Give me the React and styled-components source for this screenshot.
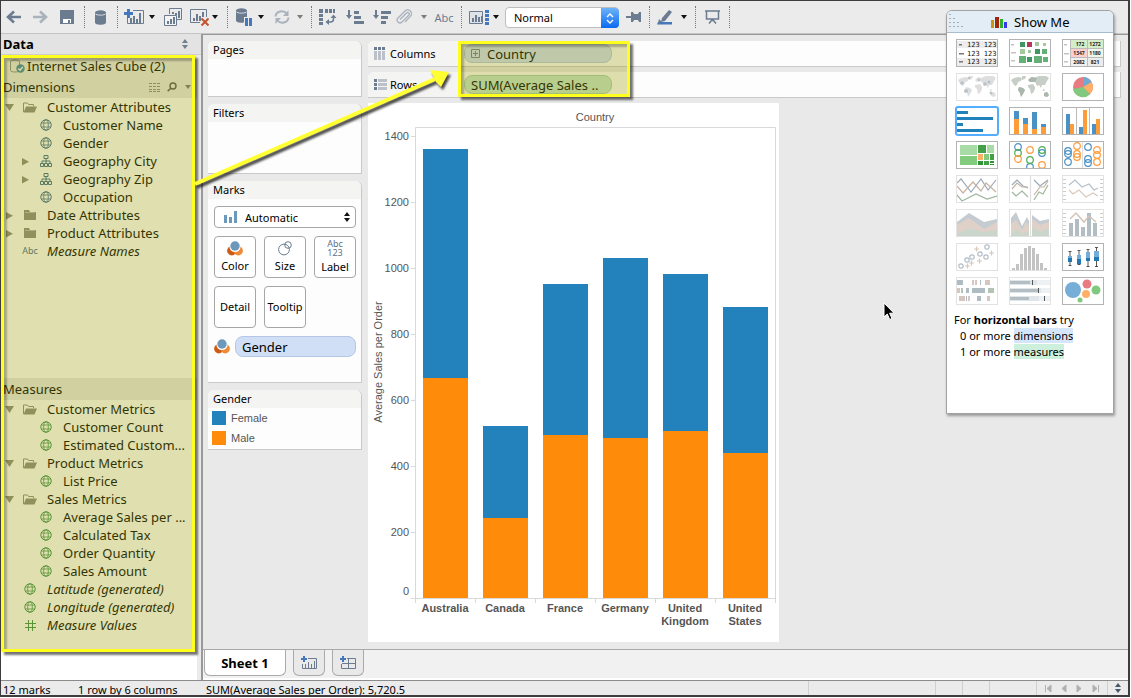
import React, { useState } from 'react'
import styled, { createGlobalStyle, css } from 'styled-components'

const GlobalStyle = createGlobalStyle`
  * {
    box-sizing: border-box;
  }
  body {
    margin: 0;
    background: #fff;
    color: #000;
    font-family: 'Noto Sans', 'Open Sans', sans-serif;
    font-size: 11px;
    line-height: 16px;
  }
  button, select {
    font-family: inherit;
    font-size: inherit;
    color: inherit;
  }
  ul {
    list-style: none;
    margin: 0;
    padding: 0;
  }
  svg {
    display: block;
    flex: none;
  }
`

const BLUE = '#2381bc'
const ORANGE = '#ff8b0b'
const SLATE = '#6b7b90'
const ACCENT = '#4477bb'

const Window = styled.div`
  position: relative;
  display: flex;
  flex-direction: column;
  min-height: 697px;
  height: calc(100vh - 1px);
  margin-right: 1px;
  border: solid #3f3c3f;
  border-width: 1px 2px 2px 1px;
  background: #ebebeb;
  overflow: hidden;
`

/* toolbar */

const Toolbar = styled.header`
  display: flex;
  align-items: center;
  height: 33px;
  flex: none;
  border-bottom: 1px solid #c4c4c4;
`

const Tool = styled.button`
  display: flex;
  align-items: center;
  justify-content: center;
  width: ${p => p.$w}px;
  height: 24px;
  padding: 0;
  border: none;
  background: none;
  color: ${SLATE};
  opacity: ${p => (p.$off ? 0.5 : 1)};
`

const Separator = styled.span`
  display: flex;
  justify-content: center;
  width: ${p => p.$w}px;
  &::before {
    content: '';
    height: 22px;
    border-left: 1px dotted #777;
  }
`

const SelectBox = styled.span`
  display: grid;
  grid-template-columns: ${p => p.$icon || '8px'} 1fr 17px;
  align-items: center;
  height: ${p => p.$h}px;
  border: 1px solid ${p => p.$line};
  border-radius: 4px;
  background: #fff;
  > * {
    grid-row: 1;
    pointer-events: none;
  }
  select {
    grid-column: 1 / -1;
    height: 100%;
    padding: 0 0 0 ${p => p.$pad}px;
    border: none;
    background: none;
    appearance: none;
    pointer-events: auto;
  }
`

const FitSelect = styled(SelectBox)`
  width: 114px;
  margin-left: 5px;
`

const BlueStepper = styled.span`
  grid-column: 3;
  display: flex;
  align-items: center;
  justify-content: center;
  height: 20px;
  margin-right: -1px;
  border-radius: 0 4px 4px 0;
  background: linear-gradient(#6cb3fa, #0a69f0);
`

const StepperSlot = styled.span`
  grid-column: 3;
  display: flex;
  justify-content: center;
`

const IconSlot = styled.span`
  grid-column: 1;
  display: flex;
  justify-content: center;
`

/* data pane */

const Body = styled.div`
  display: flex;
  flex: 1;
  min-height: 0;
`

const DataPane = styled.aside`
  display: flex;
  flex-direction: column;
  width: 200px;
  flex: none;
  background: #ebebeb;
`

const DataHeader = styled.div`
  display: flex;
  align-items: center;
  justify-content: space-between;
  height: 21px;
  padding: 0 12px 0 2px;
  border-bottom: 1px solid #cdcdcd;
  background: #e3e3e3;
  h2 {
    margin: 0;
    font-size: 13px;
  }
`

const DataContent = styled.div`
  display: flex;
  flex-direction: column;
  flex: 1;
  margin-right: 4px;
  padding-bottom: 28px;
  background: #fff;
`

const Tree = styled.div`
  position: relative;
  display: flex;
  flex-direction: column;
  flex: 1;
  font-size: 13px;
  line-height: 18px;
`

const SourceRow = styled.div`
  display: grid;
  grid-template-columns: 18px 1fr;
  align-items: center;
  height: 21px;
  padding-left: 8px;
  background: #e9e9e9;
`

const SectionTitle = styled.h3`
  display: flex;
  align-items: center;
  gap: 6px;
  height: 22px;
  margin: 0;
  padding: 0 6px 0 2px;
  background: #e9e9e9;
  font-size: 13px;
  font-weight: normal;
  > svg:last-child {
    margin-left: 2px;
  }
`

const SectionName = styled.span`
  flex: 1;
`

const FieldList = styled.ul`
  flex: ${p => (p.$grow ? '1' : '0 0 252px')};
`

const Field = styled.li`
  display: grid;
  grid-template-columns: 16px 30px 1fr;
  align-items: center;
  height: 18px;
  padding-left: ${p => p.$level * 16}px;
  font-style: ${p => (p.$generated ? 'italic' : 'normal')};
  white-space: nowrap;
`

const Slot = styled.span`
  display: flex;
  align-items: center;
  justify-content: center;
  padding-right: 4px;
  font-size: 9px;
  font-style: normal;
  color: #3d6a8c;
`

const Expander = styled.button`
  display: flex;
  justify-content: center;
  padding: 0;
  border: none;
  background: none;
`

/* yellow markers drawn over the panes */

const marker = css`
  position: absolute;
  border: 3px solid #ffff1e;
  background: rgba(156, 156, 8, 0.32);
  box-shadow: 3px 3px 2px rgba(0, 0, 0, 0.55), inset 3px 3px 2px rgba(0, 0, 0, 0.25);
  pointer-events: none;
  z-index: 2;
`

const TreeMarker = styled.div`
  ${marker}
  inset: 0 2px 0 0;
`

const ShelfMarker = styled.div`
  ${marker}
  top: 0;
  left: 90px;
  width: 172px;
  height: 56px;
`

const ArrowLayer = styled.svg`
  position: absolute;
  top: 0;
  left: 0;
  pointer-events: none;
  z-index: 3;
  filter: drop-shadow(2px 3px 1px rgba(0, 0, 0, 0.7));
`

const Pointer = styled.svg`
  position: absolute;
  top: 301px;
  left: 882px;
  pointer-events: none;
  z-index: 3;
`

/* workspace */

const Main = styled.main`
  display: flex;
  flex-direction: column;
  flex: 1;
  min-width: 0;
  border-top: 1px solid #999;
  border-left: 2px solid #999;
  background: #e9e9e9;
`

const Workspace = styled.div`
  display: flex;
  align-items: flex-start;
  flex: 1;
  gap: 6px;
  min-height: 0;
  padding: 6px 7px 7px 5px;
`

const Cards = styled.div`
  display: flex;
  flex-direction: column;
  gap: 7px;
  width: 154px;
  flex: none;
`

const CardBox = styled.section`
  min-height: ${p => p.$h}px;
  border: solid #c9c9c9;
  border-width: 0 1px 1px 0;
  border-radius: 6px 6px 0 0;
  background: #fdfdfd;
  h3 {
    height: 18px;
    margin: 0;
    padding: 1px 5px 0;
    border-radius: 6px 6px 0 0;
    background: #f4f4f3;
    font-size: 11px;
    font-weight: normal;
  }
`

const MarksBody = styled.div`
  display: flex;
  flex-direction: column;
  gap: 8px;
  padding: 7px 5px 6px 6px;
`

const MarkGrid = styled.div`
  display: grid;
  grid-template-columns: repeat(3, 42px);
  gap: 8px;
`

const MarkButton = styled.button`
  display: flex;
  flex-direction: column;
  align-items: center;
  justify-content: center;
  gap: 2px;
  height: 42px;
  padding: 0;
  border: 1px solid #a6a6a6;
  border-radius: 4px;
  background: #fff;
  line-height: 16px;
`

const LabelSample = styled.span`
  display: flex;
  flex-direction: column;
  align-items: center;
  font-size: 9px;
  line-height: 9px;
  color: #5f6f86;
`

const MarkRow = styled.div`
  display: grid;
  grid-template-columns: 21px 1fr;
  align-items: center;
`

const Pill = styled.div`
  display: flex;
  align-items: center;
  gap: 7px;
  height: ${p => p.$h || 19}px;
  padding: 0 6px;
  border: 1px solid ${p => (p.$measure ? '#a9cfae' : '#b5c7e4')};
  border-radius: 8px;
  background: ${p => (p.$measure ? '#c6e6cb' : '#d0dff5')};
  font-size: 13px;
  white-space: nowrap;
`

const Legend = styled.ul`
  padding: 0 4px;
  li {
    display: flex;
    align-items: center;
    gap: 5px;
    height: 20px;
    font-family: 'Liberation Sans', Arial, sans-serif;
    color: #555;
  }
`

const Swatch = styled.i`
  width: 14px;
  height: 14px;
  background: ${p => p.color};
`

const Sheet = styled.div`
  position: relative;
  display: flex;
  flex-direction: column;
  align-items: stretch;
  flex: 1;
  gap: 5px;
  min-width: 0;
`

const Shelf = styled.div`
  display: grid;
  grid-template-columns: 90px 148px;
  column-gap: 6px;
  align-items: center;
  height: 26px;
  border: solid #c9c9c9;
  border-width: 0 1px 1px 0;
  border-radius: 6px 0 0 0;
  background: #fdfdfd;
`

const ShelfLabel = styled.div`
  display: grid;
  grid-template-columns: 16px 1fr;
  align-items: center;
  height: 25px;
  padding-left: 6px;
  border-radius: 6px 0 0 0;
  background: #f4f4f3;
`

const ChartArea = styled.div`
  align-self: flex-start;
  background: #fff;
  text {
    font-family: 'Liberation Sans', Arial, sans-serif;
    font-size: 11px;
    fill: #555;
  }
`

/* sheet tabs and status bar */

const Tabs = styled.nav`
  display: flex;
  height: 31px;
  flex: none;
  gap: 7px;
  padding-left: 1px;
  border-top: 1px solid #aaa;
  border-bottom: 2px solid #fff;
  background: #f1f1f1;
`

const Tab = styled.button`
  display: flex;
  align-items: center;
  justify-content: center;
  width: ${p => (p.$active ? 82 : 32)}px;
  height: 26px;
  padding: 0;
  border: solid #aaa;
  border-width: 0 1px 1px;
  border-radius: 0 0 6px 6px;
  background: ${p => (p.$active ? '#fff' : '#e9e9e9')};
  font-size: 13px;
  font-weight: bold;
`

const StatusBar = styled.footer`
  display: flex;
  align-items: stretch;
  height: 15px;
  flex: none;
  padding-left: 2px;
  border-top: 1px solid #8c8c8c;
  line-height: 17px;
  white-space: nowrap;
`

const StatusText = styled.span`
  width: ${p => p.$w}px;
`

const StatusCell = styled.span`
  display: flex;
  align-items: center;
  justify-content: space-evenly;
  width: ${p => p.$w}px;
  border-left: 1px solid #d0d0d0;
`

const NavButton = styled.button`
  padding: 0;
  border: none;
  background: none;
`

const Spacer = styled.span`
  flex: 1;
`

/* show me */

const ShowMePanel = styled.aside`
  position: absolute;
  top: 9px;
  right: 14px;
  width: 168px;
  min-height: 404px;
  border: 1px solid #a2a2a2;
  border-radius: 6px 6px 0 0;
  background: #fff;
  box-shadow: 1px 2px 3px rgba(0, 0, 0, 0.35);
  z-index: 1;
`

const ShowMeHeader = styled.div`
  display: grid;
  grid-template-columns: 43px 23px 1fr;
  align-items: center;
  height: 22px;
  padding-left: 1px;
  border-bottom: 1px solid #a9bccb;
  border-radius: 5px 5px 0 0;
  background: #e2edf6;
  h2 {
    margin: 0;
    font-size: 13px;
    font-weight: normal;
  }
`

const Thumbs = styled.div`
  display: grid;
  grid-template-columns: repeat(3, 42px);
  column-gap: 11px;
  row-gap: 6px;
  padding: 6px 9px;
`

const Thumb = styled.button`
  display: block;
  height: 28px;
  padding: 0;
  border: 1px solid ${p => (p.$enabled ? '#b3b3b3' : '#e2e2e2')};
  background: #fff;
  ${p =>
    p.$selected &&
    css`
      border-color: #55adff;
      border-radius: 2px;
      box-shadow: 0 0 0 1px #55adff;
    `}
`

const Hint = styled.div`
  padding: 1px 7px;
  p {
    margin: 0;
  }
  p + p {
    padding-left: 6px;
  }
`

const Mark = styled.mark`
  color: inherit;
  background: ${p => (p.$measure ? '#cdf0dc' : '#d5e6fb')};
`

/* ---- icons ---- */

const Caret = ({ color = '#111' }) => (
  <svg width="6" height="4">
    <path d="M0 0h6L3 4z" fill={color} />
  </svg>
)

const UpDown = ({ color = '#111', stroke }) => (
  <svg width="8" height="12" viewBox="0 0 8 12">
    {stroke ? (
      <path d="M1 5l3-3 3 3M1 8l3 3 3-3" fill="none" stroke={color} strokeWidth="1.4" />
    ) : (
      <path d="M1 5h6L4 1zM1 7h6l-3 4z" fill={color} />
    )}
  </svg>
)

const Triangle = ({ open }) => (
  <svg width="9" height="9" viewBox="0 0 9 9">
    <path d={open ? 'M0 1h9L4.5 8z' : 'M1 1v7.500l7-3.750z'} fill="#8a8a80" />
  </svg>
)

const BackIcon = () => (
  <svg width="16" height="14" viewBox="0 0 16 14">
    <path d="M15 7H2M8 1.500L2 7l6 5.500" fill="none" stroke={SLATE} strokeWidth="2.600" />
  </svg>
)

const ForwardIcon = () => (
  <svg width="16" height="14" viewBox="0 0 16 14">
    <path d="M1 7h13M8 1.500L14 7l-6 5.500" fill="none" stroke={SLATE} strokeWidth="2.600" />
  </svg>
)

const SaveIcon = () => (
  <svg width="14" height="14" viewBox="0 0 14 14">
    <path d="M0 0h14v14H0z" fill={SLATE} />
    <path d="M3 9h8v4H3z" fill="#fff" />
    <path d="M8 10h2v3H8z" fill={SLATE} />
  </svg>
)

const Cylinder = () => (
  <>
    <path d="M0 2.500v10C0 15.500 11 15.500 11 12.500v-10z" fill={SLATE} />
    <ellipse cx="5.500" cy="2.500" rx="5.500" ry="2.200" fill={SLATE} />
    <path d="M0 3.500c1 2.200 10 2.200 11 0" fill="none" stroke="#d7dce2" />
  </>
)

const DatabaseIcon = () => (
  <svg width="11" height="15">
    <Cylinder />
  </svg>
)

const PauseDataIcon = () => (
  <svg width="17" height="18" viewBox="0 0 17 18">
    <Cylinder />
    <path d="M8 9h9v9H8z" fill="#ebebeb" />
    <path d="M9 10h3v8H9zM13 10h3v8h-3z" fill={ACCENT} />
  </svg>
)

const NewSheetIcon = () => (
  <svg width="20" height="16" viewBox="0 0 20 16">
    <path d="M9 1.500h10.500v13h-16V9" fill="none" stroke={SLATE} />
    <path d="M6 9h2v5H6zM9 7h2v7H9zM12 10h2v4h-2zM15 4h2v10h-2z" fill={SLATE} />
    <path d="M3 0h3v3h3v3H6v3H3V6H0V3h3z" fill={ACCENT} />
  </svg>
)

const DuplicateIcon = () => (
  <svg width="18" height="18" viewBox="0 0 18 18">
    <path d="M5.500 6V.5h12v11H13" fill="none" stroke={SLATE} />
    <path d="M.5 7.500h12v10H.5z" fill="#f3f3f3" stroke={SLATE} />
    <path d="M3 13h2v3H3zM6 11h2v5H6zM9 9h2v7H9zM8 4h2v2H8zM11 5h2v2h-2zM14 3h2v7h-2z" fill={SLATE} />
  </svg>
)

const ClearIcon = () => (
  <svg width="19" height="17" viewBox="0 0 19 17">
    <path d="M10 13.500H.5V.5h16V8" fill="none" stroke={SLATE} />
    <path d="M3 9h2v3H3zM6 5h2v7H6zM9 7h2v5H9zM12 3h2v5h-2z" fill={SLATE} />
    <path d="M11.500 9.500l7 7M18.500 9.500l-7 7" stroke="#c4532d" strokeWidth="2" />
  </svg>
)

const RefreshIcon = () => (
  <svg width="16" height="14" viewBox="0 0 16 14">
    <path d="M1.500 6.500C2 1 9.500-.5 13 4M14.500 7.500C14 13 6.500 14.500 3 10" fill="none" stroke={SLATE} strokeWidth="2" />
    <path d="M14.500 0v6H9zM1.500 14V8H7z" fill={SLATE} />
  </svg>
)

const SwapIcon = () => (
  <svg width="18" height="16" viewBox="0 0 18 16">
    <path d="M0 0h4v4H0zM6 0h3v4H6zM10 0h3v4h-3zM14 0h2v4h-2zM0 5h4v3H0zM0 9h4v3H0zM0 13h4v3H0z" fill={SLATE} />
    <path d="M9 13h2.500a3 3 0 0 0 3-3V8" fill="none" stroke={SLATE} strokeWidth="1.500" />
    <path d="M10 10v6l-3.500-3zM11.500 9h6l-3-3.500z" fill={SLATE} />
  </svg>
)

const SortIcon = ({ bars }) => (
  <svg width="18" height="15" viewBox="0 0 18 15">
    <path d="M2 0h2v5h2L3 9 0 5h2z" fill={SLATE} />
    {bars.map((w, i) => (
      <path key={i} d={`M8 ${1 + i * 5}h${w}v3h-${w}z`} fill={SLATE} />
    ))}
  </svg>
)

const ClipIcon = () => (
  <svg width="16" height="16" viewBox="0 0 16 16">
    <path
      d="M4 10.500l6.500-6.500a1.600 1.600 0 0 1 2.300 2.300L6 13a2.800 2.800 0 0 1-4-4l7-7a3.800 3.800 0 0 1 5.400 5.400L9 13"
      fill="none"
      stroke={SLATE}
      strokeWidth="1.300"
    />
  </svg>
)

const ShowCardsIcon = () => (
  <svg width="20" height="15" viewBox="0 0 20 15">
    <path d="M.5 1.500h13v12H.5z" fill="#dfe2e7" stroke={SLATE} />
    <path d="M3 8h2v4H3zM6 5h2v7H6zM9 7h2v5H9zM12 6h1v6h-1z" fill={SLATE} />
    <path d="M16 0h4v3h-4zM16 4h4v3h-4zM16 8h4v3h-4zM16 12h4v3h-4z" fill={ACCENT} />
  </svg>
)

const PinIcon = () => (
  <svg width="15" height="10" viewBox="0 0 15 10">
    <path d="M0 4h5V0h2l1 2h4l1-2h2v10h-2l-1-2H8l-1 2H5V6H0z" fill={SLATE} />
  </svg>
)

const HighlightIcon = () => (
  <svg width="16" height="15" viewBox="0 0 16 15">
    <path d="M12 0l3 2-7 9-4 1 1-4z" fill={SLATE} />
    <path d="M1 12h14v2.500H0z" fill={ACCENT} />
    <path d="M2 9l3 3-4 1z" fill={SLATE} />
  </svg>
)

const PresentIcon = () => (
  <svg width="15" height="14" viewBox="0 0 15 14">
    <path d="M0 1h15M1.500 1.500v7.500h12V1.500M7.500 9v2M4 13.500l2.500-3h2l2.500 3" fill="none" stroke={SLATE} strokeWidth="1.500" />
  </svg>
)

const GlobeIcon = ({ color }) => (
  <svg width="12" height="12" viewBox="0 0 12 12" fill="none" stroke={color}>
    <circle cx="6" cy="6" r="5.200" />
    <ellipse cx="6" cy="6" rx="2.300" ry="5.200" strokeWidth=".8" />
    <path d="M1.500 4h9M1.500 8h9" strokeWidth=".8" />
  </svg>
)

const HierarchyIcon = () => (
  <svg width="12" height="12" viewBox="0 0 12 12" fill="none" stroke="#3d6a8c">
    <path d="M4 .5h4v3H4zM.5 8.500h3v3h-3zM4.500 8.500h3v3h-3zM8.500 8.500h3v3h-3zM6 3.500v5M2 8.500v-2.500h8v2.500" />
  </svg>
)

const FolderIcon = ({ open }) =>
  open ? (
    <svg width="14" height="11" viewBox="0 0 14 11">
      <path d="M.5 10V1h4l1 1.500h5V4" fill="none" stroke="#8b8b85" />
      <path d="M3 4.500h11L11.500 10.500H.5z" fill="#8b8b85" />
    </svg>
  ) : (
    <svg width="12" height="10" viewBox="0 0 12 10">
      <path d="M0 0h5l1 2h6v8H0z" fill="#8b8b85" />
      <path d="M1 2.500h10" stroke="#b9b9b4" />
    </svg>
  )

const HashIcon = () => (
  <svg width="11" height="11" viewBox="0 0 11 11">
    <path d="M3.500 0v11M7.500 0v11M0 3.500h11M0 7.500h11" stroke="#3a8f4a" />
  </svg>
)

const SourceIcon = () => (
  <svg width="16" height="14" viewBox="0 0 16 14">
    <path d="M1.500 2.500c0-2 9-2 9 0v9c0 2-9 2-9 0z" fill="none" stroke="#8b8b85" />
    <circle cx="11.500" cy="9.500" r="4.200" fill="#3f85a5" />
    <path d="M9.300 9.500l1.700 1.700 2.800-3.200" fill="none" stroke="#fff" strokeWidth="1.300" />
  </svg>
)

const ListIcon = () => (
  <svg width="12" height="9" viewBox="0 0 12 9">
    <path d="M0 .5h12M0 3.500h12M0 6.500h12M0 8.500h12" stroke="#888" strokeDasharray="3 1" />
  </svg>
)

const SearchIcon = () => (
  <svg width="10" height="10" viewBox="0 0 10 10">
    <circle cx="6" cy="4" r="3" fill="none" stroke="#555" strokeWidth="1.400" />
    <path d="M4 6L.7 9.300" stroke="#555" strokeWidth="1.600" />
  </svg>
)

const ColorIcon = () => (
  <svg width="16" height="15" viewBox="0 0 16 15">
    <circle cx="4.800" cy="9.700" r="4.700" fill="#cf5a14" />
    <circle cx="11.200" cy="9.700" r="4.700" fill="#ee8b37" />
    <circle cx="8" cy="5.500" r="5.600" fill="#fff" />
    <circle cx="8" cy="5" r="4.700" fill="#6c99bb" />
  </svg>
)

const SizeIcon = () => (
  <svg width="14" height="15" viewBox="0 0 14 15" fill="none" stroke="#6b7b90">
    <circle cx="6" cy="8.500" r="5.400" />
    <circle cx="10" cy="4" r="3.300" />
  </svg>
)

const BarsIcon = () => (
  <svg width="14" height="12" viewBox="0 0 14 12">
    <path d="M0 4h3v8H0zM5 6h3v6H5zM10 0h3v12h-3z" fill="#6c99bb" />
  </svg>
)

const ColumnsIcon = () => (
  <svg width="11" height="13" viewBox="0 0 11 13">
    <path d="M0 0h3v3H0zM4 0h3v3H4zM8 0h3v3H8z" fill={SLATE} />
    <path d="M0 4h3v9H0zM4 4h3v9H4zM8 4h3v9H8z" fill="#bcc1c9" />
  </svg>
)

const RowsIcon = () => (
  <svg width="13" height="11" viewBox="0 0 13 11">
    <path d="M0 0h3v3H0zM0 4h3v3H0zM0 8h3v3H0z" fill={SLATE} />
    <path d="M4 0h9v3H4zM4 4h9v3H4zM4 8h9v3H4z" fill="#bcc1c9" />
  </svg>
)

const PlusBox = () => (
  <svg width="9" height="9" viewBox="0 0 9 9">
    <path d="M.5 .5h8v8h-8zM2 4.500h5M4.500 2v5" fill="none" stroke="#6f7d8c" />
  </svg>
)

const NewTabIcon = ({ dashboard }) => (
  <svg width="16" height="14" viewBox="0 0 16 14">
    <path d="M7 2.500h8.500v10h-14V8" fill="none" stroke={SLATE} />
    {dashboard ? (
      <path d="M2 7.500h13M8.500 3v9" stroke={SLATE} />
    ) : (
      <path d="M4 8h1v4H4zM7 6h1v6H7zM10 8h1v4h-1zM13 5h1v7h-1z" fill={SLATE} />
    )}
    <path d="M2 0h2v2h2v2H4v2H2V4H0V2h2z" fill={ACCENT} />
  </svg>
)

const GripIcon = () => (
  <svg width="15" height="15" viewBox="0 0 15 15" fill="#a3b0bb">
    {[1, 2, 3, 4].map(n =>
      Array.from({ length: n }, (_, i) => <rect key={`${n}-${i}`} x={1 + i * 4} y={n * 4 - 4} width="2" height="1" />)
    )}
  </svg>
)

const ShowMeIcon = () => (
  <svg width="17" height="12" viewBox="0 0 17 12">
    <path d="M0 4h3v8H0z" fill="#c79a0c" />
    <path d="M4 1h4v11H4z" fill="#a3260b" />
    <path d="M9 3h3v9H9z" fill="#2fb12f" />
    <path d="M13 6h3v6h-3z" fill="#3838ee" />
  </svg>
)

const NAV_PATHS = ['M1.500 1v7M7 1v7L3 4.500z', 'M6 1v7L2 4.500z', 'M2 1v7l4-3.500z', 'M2 1v7l4-3.500zM7.500 1v7']

/* ---- chart type thumbnails, drawn on a 40x26 field ---- */

const G = '#b0bcc4'
const B = '#4a92c6'
const O = '#ff9c3a'

const rects = (list, fill) => list.map(([x, y, w, h, f], i) => <rect key={i} x={x} y={y} width={w} height={h} fill={f || fill} />)
const circles = (list, color) =>
  list.map(([x, y], i) => <circle key={i} cx={x} cy={y} r="3.300" fill="none" stroke={color} strokeWidth="1.200" />)

const World = ({ land }) => (
  <path
    fill={land}
    d="M1 6l3-2 5-1 3 1-1 3-3 1-1 3-2 1-3-4zM12 2l4 0-1 3-3 1zM9 13l4 1 2 2-2 4-2 3-1-4-2-3zM18 6l3-3 3 1-1 3-3 1zM18 11l5-1 2 3 0 2-2 4-2 1-1-5-2-2zM24 4l5-2 7 0 3 2-2 3-2 4-3 0-1 3-2-3-2 1-2-4-2-1zM33 15l1 0 1 2-2 0zM34 19l3-1 2 3-2 2-3-1z"
  />
)

const thumbs = [
  {
    name: 'text table',
    enabled: true,
    art: (
      <>
        {rects([[0, 1, 40, 7], [0, 18, 40, 8]], '#ededed')}
        {rects([[2, 4, 3, 1.5], [2, 13, 5, 1.5], [2, 21, 4, 1.5]], '#777')}
        {[7, 16, 24].map(y => (
          <text key={y} x="10" y={y} fontSize="7" fontFamily="'DejaVu Sans Mono', monospace" fill="#111">
            123 123
          </text>
        ))}
      </>
    )
  },
  {
    name: 'heat map',
    enabled: true,
    art: (
      <>
        {rects([[1, 4, 3, 1.5], [1, 12, 5, 1.5], [1, 20, 4, 1.5]], '#c4c4c4')}
        {rects([
          [10, 2, 5, 5, '#3f9663'], [17, 2, 5, 5, '#b7375b'], [25, 2, 4, 4, '#a5c99c'], [33, 3, 3, 3, '#a5c99c'],
          [10, 9, 5, 5, '#a5c99c'], [18, 10, 3, 3, '#a5c99c'], [25, 9, 5, 5, '#3f9663'], [32, 9, 5, 5, '#64b077'],
          [9, 16, 7, 7, '#64b077'], [17, 17, 5, 5, '#3f9663'], [24, 16, 8, 7, '#64b077'], [33, 17, 5, 5, '#64b077']
        ])}
      </>
    )
  },
  {
    name: 'highlight table',
    enabled: true,
    art: (
      <>
        {rects([[1, 4, 3, 1.5], [1, 13, 5, 1.5], [1, 21, 4, 1.5]], '#c4c4c4')}
        {rects([
          [8, 0, 16, 8, '#d3eec9'], [25, 0, 15, 8, '#d3eec9'], [8, 9, 16, 8, '#fbcfce'],
          [25, 9, 15, 8, '#eef5e9'], [8, 18, 16, 8, '#f0f0f0'], [25, 18, 15, 8, '#ececec']
        ])}
        <path d="M7.500 0v26M24.500 0v26M7 8.500h33M7 17.500h33" stroke="#bbb" />
        <g fontSize="5" fontWeight="bold" fill="#222" textAnchor="middle">
          <text x="17" y="6">172</text>
          <text x="32" y="6">1272</text>
          <text x="16" y="15">1347</text>
          <text x="32" y="15">1180</text>
          <text x="16" y="24">2082</text>
          <text x="32" y="24">821</text>
        </g>
      </>
    )
  },
  {
    name: 'symbol map',
    art: (
      <>
        <World land="#dedede" />
        <g fill="#b7c3cb">
          <circle cx="5" cy="9" r="1.800" />
          <circle cx="9" cy="17" r="2" />
          <circle cx="12" cy="4" r="1.200" />
          <circle cx="28" cy="10" r="1.800" />
          <circle cx="32" cy="8" r="1.500" />
          <circle cx="34" cy="19" r="1.500" />
          <circle cx="22" cy="6" r="1.200" />
        </g>
      </>
    )
  },
  {
    name: 'filled map',
    art: (
      <>
        <World land="#c7cdc7" />
        <path d="M9 13l4 1 2 2-2 4-2 3-1-4-2-3zM18 6l4-3 5 1-2 4-5 0zM34 19l3-1 2 3-2 2-3-1z" fill="#abb6ad" />
      </>
    )
  },
  {
    name: 'pie chart',
    enabled: true,
    art: (
      <>
        <circle cx="20" cy="13" r="10" fill="#e77b80" />
        <path d="M20 13V3a10 10 0 0 1 8.700 5z" fill="#71a9d3" />
        <path d="M20 13l8.700-5a10 10 0 0 1-1.700 12z" fill="#ffb067" />
        <path d="M20 13l7 7.200a10 10 0 0 1-16.900-5.200z" fill="#80c97e" />
      </>
    )
  },
  {
    name: 'horizontal bars',
    enabled: true,
    selected: true,
    art: rects([[0, 3, 11, 3], [0, 9, 36, 3], [0, 15, 6, 3], [0, 21, 26, 3]], BLUE)
  },
  {
    name: 'stacked bars',
    enabled: true,
    art: (
      <>
        {rects([[4, 3, 5, 9], [13, 10, 5, 6], [22, 4, 5, 17], [31, 16, 5, 3]], B)}
        {rects([[4, 11, 5, 15], [13, 16, 5, 10], [22, 21, 5, 5], [31, 19, 5, 7]], O)}
      </>
    )
  },
  {
    name: 'side-by-side bars',
    enabled: true,
    art: (
      <>
        <path d="M13.500 0v26M26.500 0v26" stroke="#bbb" />
        {rects([[3, 6, 4, 20], [16, 19, 4, 7], [29, 16, 4, 10]], B)}
        {rects([[7, 16, 4, 10], [20, 2, 4, 24], [33, 11, 4, 15]], O)}
      </>
    )
  },
  {
    name: 'treemap',
    enabled: true,
    art: rects([
      [3, 3, 17, 10, '#a9dba6'], [3, 14, 17, 9, '#83cb7f'], [21, 3, 8, 8, '#43a047'], [30, 3, 7, 8, '#a9dba6'],
      [21, 12, 5, 6, '#ffb067'], [27, 12, 5, 6, '#83cb7f'], [33, 12, 4, 6, '#43a047'],
      [21, 19, 5, 4, '#2e9634'], [27, 19, 5, 4, '#43a047'], [33, 19, 4, 2, '#2e9634'], [33, 22, 4, 1, '#2e9634']
    ])
  },
  {
    name: 'circle views',
    enabled: true,
    art: (
      <>
        {circles([[8, 5], [32, 11], [20, 25]], B)}
        {circles([[8, 11], [20, 18], [32, 8]], '#4caf50')}
        {circles([[8, 17], [20, 8], [32, 23]], O)}
      </>
    )
  },
  {
    name: 'side-by-side circles',
    enabled: true,
    art: (
      <>
        <path d="M19.500 0v26" stroke="#ddd" />
        {circles([[5, 9], [5, 12], [5, 20], [25, 5], [25, 17], [25, 21]], B)}
        {circles([[14, 4], [14, 12], [14, 15], [34, 8], [34, 13], [34, 20]], O)}
      </>
    )
  },
  {
    name: 'lines (continuous)',
    art: (
      <g fill="none" strokeWidth="1.200">
        <path d="M0 6l4-4 10 13 10-13 7 11 8-10" stroke="#9aa9b8" transform="translate(0 1)" />
        <path d="M0 10l6 7 10-11 8 9 5-8 10 9" stroke="#c8b3a3" />
        <path d="M0 19l5 6 14-7 11 5 10-3" stroke="#9fb79f" />
      </g>
    )
  },
  {
    name: 'lines (discrete)',
    art: (
      <g fill="none" strokeWidth="1.200">
        <path d="M20.500 0v26" stroke="#ddd" />
        <path d="M2 9l5-5 6 6 5 2M24 4l6 6 8-6" stroke="#9aa9b8" />
        <path d="M2 13l5-6 5 4 6 0M24 19l6-8 4 0 4-6" stroke="#c8b3a3" />
        <path d="M2 16l4 4 6-5 6 6M24 24l5-8 4 2 5-9" stroke="#9fb79f" />
      </g>
    )
  },
  {
    name: 'dual lines',
    art: (
      <g fill="none" strokeWidth="1.200">
        <path d="M1.500 3v22M38.500 3v22" stroke="#ccc" strokeWidth="3" strokeDasharray="1 3" />
        <path d="M6 9l6-5 7 7 7-3 5 6 4-2" stroke="#b7c1cb" />
        <path d="M6 14l4 4 6-4 7 7 7-4 5 3" stroke="#d8c9be" />
      </g>
    )
  },
  {
    name: 'area charts (continuous)',
    art: (
      <>
        <path d="M0 12L12 3l15 9 13-3v17H0z" fill="#c5ccd1" />
        <path d="M0 15L12 8l15 11 13-7v14H0z" fill="#e0d1c8" />
        <path d="M0 24l13-6 13 4 14-2v6H0z" fill="#cad6cc" />
      </>
    )
  },
  {
    name: 'area charts (discrete)',
    art: (
      <>
        <path d="M1 8l5-6 6 14 5-9 2 4v15H1zM22 5l8 6 9-2v17H22z" fill="#c5ccd1" />
        <path d="M1 14l5-4 6 10 4-8 3 4v10H1zM22 9l8 6 9-3v14H22z" fill="#e0d1c8" />
        <path d="M1 24l6-5 6 5 6-3v5H1zM22 17l8 5 9-4v8H22z" fill="#cad6cc" />
        <path d="M20.500 0v26" stroke="#ddd" />
      </>
    )
  },
  {
    name: 'dual combination',
    art: (
      <>
        {rects([[6, 13, 4, 13], [12, 9, 4, 17], [18, 17, 4, 9], [24, 3, 4, 23], [30, 13, 4, 13]], '#b2bdc4')}
        <path d="M1.500 3v22M38.500 3v22" stroke="#ccc" strokeWidth="3" strokeDasharray="1 3" />
        <path d="M7 9l6-6 8 9 5-6 7 6" fill="none" stroke="#d3c4ba" strokeWidth="1.500" />
      </>
    )
  },
  {
    name: 'scatter plot',
    art: (
      <g fill="none" strokeWidth="1.200">
        <g stroke="#b3bec8">
          {[[4, 22], [10, 16], [15, 13], [23, 10], [30, 3], [29, 13]].map(([x, y]) => (
            <circle key={x} cx={x} cy={y} r="2.200" />
          ))}
        </g>
        <path d="M8 22h5M10.500 19.500v5M12 19h5M14.500 16.500v5M20 17h5M22.500 14.500v5M17 5h5M19.500 2.500v5M32 9h5M34.500 6.500v5" stroke="#d6c9bc" />
      </g>
    )
  },
  {
    name: 'histogram',
    art: rects(
      [[2, 24, 3, 2], [6, 20, 3, 6], [10, 10, 3, 16], [14, 4, 3, 22], [18, 2, 3, 24], [22, 4, 3, 22], [26, 10, 3, 16], [30, 19, 3, 7], [34, 24, 3, 2]],
      '#c3c3c3'
    )
  },
  {
    name: 'box-and-whisker plot',
    enabled: true,
    art: (
      <>
        <path d="M7 7v15M16 7v14M25 6v17M33.500 4v19M5.500 7.500h3M5.500 21.500h3M14.500 6.500h3M14.500 20.500h3M23.500 5.500h3M23.500 22.500h3M32 3.500h3M32 22.500h3" stroke="#444" strokeWidth=".9" />
        {rects([[5, 12, 4, 4], [14, 11, 4, 4], [23, 8, 4, 8], [31, 7, 5, 8]], '#75acd6')}
        {rects([[5, 14, 4, 4], [14, 15, 4, 5], [23, 14, 4, 3], [31, 13, 5, 4]], '#2277b5')}
      </>
    )
  },
  {
    name: 'gantt',
    art: rects([
      [0, 2, 6, 5, G], [15, 2, 2, 5, '#d5c7c0'], [18, 2, 2, 5, '#d5c7c0'], [23, 2, 1, 5, G], [28, 2, 5, 5, '#d5c7c0'],
      [0, 10, 3, 5, '#d5c7c0'], [4, 10, 2, 5, '#b3c4b5'], [9, 10, 3, 5, G], [15, 10, 13, 5, G], [31, 10, 6, 5, '#b3c4b5'],
      [2, 18, 6, 5, '#d5c7c0'], [9, 18, 1, 5, G], [11, 18, 2, 5, '#d5c7c0'], [20, 18, 4, 5, G], [30, 18, 3, 5, '#d5c7c0']
    ])
  },
  {
    name: 'bullet graph',
    art: (
      <>
        {rects([[0, 2, 40, 5], [0, 10, 40, 5], [0, 18, 40, 5]], '#eef1f4')}
        {rects([[0, 2, 27, 5], [0, 10, 31, 5], [0, 18, 29, 5]], '#e0e5e9')}
        {rects([[0, 3, 20, 3], [0, 11, 28, 3], [0, 19, 19, 3]], '#b2bdc4')}
        {rects([[22, 2, 1, 5], [28, 10, 1, 5], [34, 18, 1, 5]], '#555')}
      </>
    )
  },
  {
    name: 'packed bubbles',
    enabled: true,
    art: (
      <>
        <circle cx="10" cy="12" r="8" fill="#77aed8" />
        <circle cx="24" cy="6" r="4.500" fill="#e77b80" />
        <circle cx="33" cy="12" r="4.500" fill="#80c97e" />
        <circle cx="23" cy="16" r="4" fill="#ffb067" />
        <circle cx="17" cy="22" r="2.500" fill="#80c97e" />
      </>
    )
  }
]

/* ---- data ---- */

const dimensions = [
  { label: 'Customer Attributes', kind: 'folder', open: true },
  { label: 'Customer Name', kind: 'globe', level: 1 },
  { label: 'Gender', kind: 'globe', level: 1 },
  { label: 'Geography City', kind: 'hierarchy', level: 1 },
  { label: 'Geography Zip', kind: 'hierarchy', level: 1 },
  { label: 'Occupation', kind: 'globe', level: 1 },
  { label: 'Date Attributes', kind: 'folder' },
  { label: 'Product Attributes', kind: 'folder' },
  { label: 'Measure Names', kind: 'abc', generated: true }
]

const measures = [
  { label: 'Customer Metrics', kind: 'folder', open: true },
  { label: 'Customer Count', kind: 'globe', level: 1 },
  { label: 'Estimated Custom...', kind: 'globe', level: 1 },
  { label: 'Product Metrics', kind: 'folder', open: true },
  { label: 'List Price', kind: 'globe', level: 1 },
  { label: 'Sales Metrics', kind: 'folder', open: true },
  { label: 'Average Sales per ...', kind: 'globe', level: 1 },
  { label: 'Calculated Tax', kind: 'globe', level: 1 },
  { label: 'Order Quantity', kind: 'globe', level: 1 },
  { label: 'Sales Amount', kind: 'globe', level: 1 },
  { label: 'Latitude (generated)', kind: 'globe', generated: true },
  { label: 'Longitude (generated)', kind: 'globe', generated: true },
  { label: 'Measure Values', kind: 'hash', generated: true }
]

const sales = [
  { country: ['Australia'], male: 667, total: 1361 },
  { country: ['Canada'], male: 243, total: 521 },
  { country: ['France'], male: 494, total: 952 },
  { country: ['Germany'], male: 485, total: 1030 },
  { country: ['United', 'Kingdom'], male: 506, total: 982 },
  { country: ['United', 'States'], male: 438, total: 882 }
]

function FieldIcon({ kind, open, color }) {
  if (kind === 'folder') return <FolderIcon open={open} />
  if (kind === 'hierarchy') return <HierarchyIcon />
  if (kind === 'hash') return <HashIcon />
  if (kind === 'abc') return 'Abc'
  return <GlobeIcon color={color} />
}

function Fields({ items, color, grow }) {
  return (
    <FieldList $grow={grow}>
      {items.map(({ label, kind, open, level = 0, generated }) => (
        <Field key={label} $level={level} $generated={generated}>
          {kind === 'folder' || kind === 'hierarchy' ? (
            <Expander aria-label={`Toggle ${label}`}>
              <Triangle open={open} />
            </Expander>
          ) : (
            <span />
          )}
          <Slot>
            <FieldIcon kind={kind} open={open} color={color} />
          </Slot>
          {label}
        </Field>
      ))}
    </FieldList>
  )
}

function Chart() {
  const base = 495
  const y = v => Math.round(base - v * 0.33)
  return (
    <ChartArea>
      <svg width="411" height="539" role="img" aria-label="Average Sales per Order by Country">
        <text x="227" y="18" textAnchor="middle">Country</text>
        <text x="14" y="259" textAnchor="middle" transform="rotate(-90 14 259)">Average Sales per Order</text>
        <path d="M47.500 500V24.500h360V500M43 495.500h364" fill="none" stroke="#d9d9d9" />
        {[0, 200, 400, 600, 800, 1000, 1200, 1400].map(v => (
          <g key={v}>
            <path d={`M43 ${y(v) + 0.5}h5`} stroke="#d9d9d9" />
            <text x="41" y={v ? y(v) + 4 : y(v) - 3} textAnchor="end">{v}</text>
          </g>
        ))}
        {sales.map(({ country, male, total }, i) => {
          const x = 55 + i * 60
          return (
            <g key={country.join(' ')}>
              <rect x={x} y={y(total)} width="45" height={y(male) - y(total)} fill={BLUE} />
              <rect x={x} y={y(male)} width="45" height={base - y(male)} fill={ORANGE} />
              <path d={`M${x + 52.5} 495v5`} stroke="#d9d9d9" />
              {country.map((line, n) => (
                <text key={line} x={x + 22} y={509 + n * 13} textAnchor="middle" fontWeight="bold">{line}</text>
              ))}
            </g>
          )
        })}
      </svg>
    </ChartArea>
  )
}

function TopToolbar() {
  return (
    <Toolbar>
      <Tool $w={26} aria-label="Undo"><BackIcon /></Tool>
      <Tool $w={26} $off aria-label="Redo"><ForwardIcon /></Tool>
      <Tool $w={28} aria-label="Save"><SaveIcon /></Tool>
      <Separator $w={6} />
      <Tool $w={26} aria-label="Connect to data"><DatabaseIcon /></Tool>
      <Separator $w={8} />
      <Tool $w={26} aria-label="New worksheet"><NewSheetIcon /></Tool>
      <Tool $w={10} aria-label="New menu"><Caret /></Tool>
      <Tool $w={32} aria-label="Duplicate sheet"><DuplicateIcon /></Tool>
      <Tool $w={20} aria-label="Clear sheet"><ClearIcon /></Tool>
      <Tool $w={12} aria-label="Clear menu"><Caret /></Tool>
      <Separator $w={12} />
      <Tool $w={22} aria-label="Auto updates"><PauseDataIcon /></Tool>
      <Tool $w={12} aria-label="Auto updates menu"><Caret /></Tool>
      <Tool $w={30} $off aria-label="Run update"><RefreshIcon /></Tool>
      <Tool $w={6} $off aria-label="Run menu"><Caret /></Tool>
      <Separator $w={16} />
      <Tool $w={18} aria-label="Swap"><SwapIcon /></Tool>
      <Tool $w={36} aria-label="Sort ascending"><SortIcon bars={[5, 7, 10]} /></Tool>
      <Tool $w={18} aria-label="Sort descending"><SortIcon bars={[10, 7, 5]} /></Tool>
      <Tool $w={26} $off aria-label="Group"><ClipIcon /></Tool>
      <Tool $w={14} $off aria-label="Group menu"><Caret /></Tool>
      <Tool $w={26}>Abc</Tool>
      <Separator $w={9} />
      <Tool $w={25} aria-label="Show cards"><ShowCardsIcon /></Tool>
      <Tool $w={9} aria-label="Cards menu"><Caret /></Tool>
      <FitSelect $h={21} $line="#bdbdbd" $pad={8}>
        <select aria-label="Fit" defaultValue="Normal">
          <option>Normal</option>
        </select>
        <BlueStepper><UpDown color="#fff" stroke /></BlueStepper>
      </FitSelect>
      <Tool $w={28} aria-label="Fix axes"><PinIcon /></Tool>
      <Separator $w={4} />
      <Tool $w={28} aria-label="Highlight"><HighlightIcon /></Tool>
      <Tool $w={10} aria-label="Highlight menu"><Caret /></Tool>
      <Separator $w={12} />
      <Tool $w={22} aria-label="Presentation mode"><PresentIcon /></Tool>
      <Separator $w={12} />
    </Toolbar>
  )
}

function ShowMe() {
  const [selected, setSelected] = useState('horizontal bars')
  return (
    <ShowMePanel>
      <ShowMeHeader>
        <GripIcon />
        <ShowMeIcon />
        <h2>Show Me</h2>
      </ShowMeHeader>
      <Thumbs>
        {thumbs.map(({ name, enabled, art }) => (
          <Thumb
            key={name}
            aria-label={name}
            $enabled={enabled}
            $selected={selected === name}
            onClick={() => enabled && setSelected(name)}
          >
            <svg width="40" height="26" viewBox="0 0 40 26">{art}</svg>
          </Thumb>
        ))}
      </Thumbs>
      <Hint>
        <p>For <b>horizontal bars</b> try</p>
        <p>0 or more <Mark>dimensions</Mark></p>
        <p>1 or more <Mark $measure>measures</Mark></p>
      </Hint>
    </ShowMePanel>
  )
}

export default function App() {
  return (
    <>
      <GlobalStyle />
      <Window>
        <TopToolbar />
        <Body>
          <DataPane>
            <DataHeader>
              <h2>Data</h2>
              <UpDown color="#71808f" />
            </DataHeader>
            <DataContent>
              <Tree>
                <SourceRow>
                  <SourceIcon />
                  Internet Sales Cube (2)
                </SourceRow>
                <SectionTitle>
                  <SectionName>Dimensions</SectionName>
                  <ListIcon />
                  <SearchIcon />
                  <Caret color="#777" />
                </SectionTitle>
                <Fields items={dimensions} color="#3d6a8c" grow />
                <SectionTitle>Measures</SectionTitle>
                <Fields items={measures} color="#3a8f4a" />
                <TreeMarker />
              </Tree>
            </DataContent>
          </DataPane>
          <Main>
            <Workspace>
              <Cards>
                <CardBox $h={56}><h3>Pages</h3></CardBox>
                <CardBox $h={70}><h3>Filters</h3></CardBox>
                <CardBox $h={202}>
                  <h3>Marks</h3>
                  <MarksBody>
                    <SelectBox $h={22} $line="#a6a6a6" $pad={30} $icon="32px">
                      <IconSlot><BarsIcon /></IconSlot>
                      <select aria-label="Mark type" defaultValue="Automatic">
                        <option>Automatic</option>
                      </select>
                      <StepperSlot><UpDown /></StepperSlot>
                    </SelectBox>
                    <MarkGrid>
                      <MarkButton><ColorIcon />Color</MarkButton>
                      <MarkButton><SizeIcon />Size</MarkButton>
                      <MarkButton>
                        <LabelSample>
                          <span>Abc</span>
                          <span>123</span>
                        </LabelSample>
                        Label
                      </MarkButton>
                      <MarkButton>Detail</MarkButton>
                      <MarkButton>Tooltip</MarkButton>
                    </MarkGrid>
                    <MarkRow>
                      <ColorIcon />
                      <Pill $h={21}>Gender</Pill>
                    </MarkRow>
                  </MarksBody>
                </CardBox>
                <CardBox $h={60}>
                  <h3>Gender</h3>
                  <Legend>
                    <li><Swatch color={BLUE} />Female</li>
                    <li><Swatch color={ORANGE} />Male</li>
                  </Legend>
                </CardBox>
              </Cards>
              <Sheet>
                <Shelf>
                  <ShelfLabel><ColumnsIcon />Columns</ShelfLabel>
                  <Pill><PlusBox />Country</Pill>
                </Shelf>
                <Shelf>
                  <ShelfLabel><RowsIcon />Rows</ShelfLabel>
                  <Pill $measure>SUM(Average Sales ..</Pill>
                </Shelf>
                <Chart />
                <ShelfMarker />
              </Sheet>
            </Workspace>
            <Tabs>
              <Tab $active>Sheet 1</Tab>
              <Tab aria-label="New worksheet"><NewTabIcon /></Tab>
              <Tab aria-label="New dashboard"><NewTabIcon dashboard /></Tab>
            </Tabs>
          </Main>
        </Body>
        <StatusBar>
          <StatusText $w={75}>12 marks</StatusText>
          <StatusText $w={128}>1 row by 6 columns</StatusText>
          <span>SUM(Average Sales per Order): 5,720.5</span>
          <Spacer />
          <StatusCell $w={127} />
          <StatusCell $w={27} />
          <StatusCell $w={27} />
          <StatusCell $w={47} />
          <StatusCell $w={71}>
            {NAV_PATHS.map(d => (
              <NavButton key={d} aria-label="Change sheet">
                <svg width="9" height="9"><path d={d} fill="#b0b0b0" stroke="#b0b0b0" /></svg>
              </NavButton>
            ))}
          </StatusCell>
          <StatusCell $w={21}><UpDown color="#46566b" /></StatusCell>
        </StatusBar>
        <ShowMe />
        <ArrowLayer width="470" height="200">
          <path d="M194 183L434 78" stroke="#ffff32" strokeWidth="4" />
          <path d="M448 71l-19-2 4 7 2 5 5 5z" fill="#ffff32" />
        </ArrowLayer>
        <Pointer width="12" height="19" viewBox="0 0 12 19">
          <path d="M1 1v14l3.300-3 2.400 5.500 2.300-1-2.400-5.300H11z" fill="#000" stroke="#fff" />
        </Pointer>
      </Window>
    </>
  )
}
